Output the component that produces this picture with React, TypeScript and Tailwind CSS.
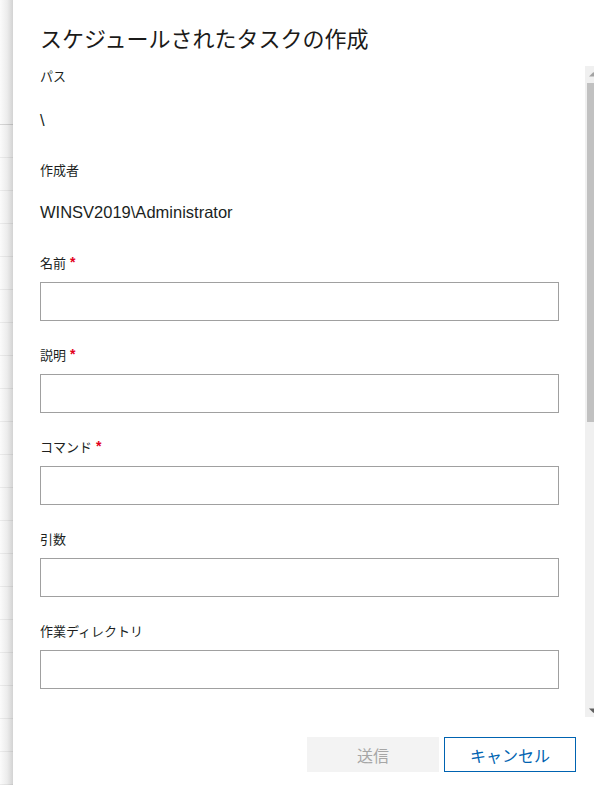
import React from 'react'

/**
 * スケジュールされたタスクの作成 パネル
 * - 左端に背後の一覧が少し見えている
 * - 右端のスクロールバーは途中で切れている
 */

const jp = { fontFamily: '"Noto Sans CJK JP", "Liberation Sans", sans-serif' }
const latin = { fontFamily: '"Liberation Sans", "Noto Sans CJK JP", sans-serif' }

interface FieldProps {
    label: string
    required?: boolean
}

function Field({ label, required }: FieldProps) {
    return (
        <div className="flex flex-col">
            <div className="flex items-center h-5 mb-[9px] text-[13px] leading-5 text-[#201f1e]" style={jp}>
                <span>{label}</span>
                {required && (
                    <span className="ml-[4px] text-[14px] font-bold text-[#e3001b] -mt-[3px]" style={latin}>
                        *
                    </span>
                )}
            </div>
            <input
                type="text"
                className="h-[39px] w-full border border-[#a0a0a0] bg-white px-2 outline-none"
            />
        </div>
    )
}

function BackgroundStrip() {
    const rows = Array.from({ length: 20 })
    return (
        <div className="flex flex-col w-[13px] shrink-0 bg-white">
            <div className="h-[5px] bg-white" />
            <div className="flex-1 flex flex-col bg-[linear-gradient(to_right,#fbfbfb,#ececec_55%,#d3d3d3)]">
                <div className="h-[125px] border-b border-[rgba(0,0,0,0.14)]" />
                {rows.map((_, i) => (
                    <div key={i} className="h-[33px] shrink-0 border-b border-[rgba(0,0,0,0.06)]" />
                ))}
            </div>
        </div>
    )
}

function ScrollBar() {
    return (
        <div className="flex flex-col w-[9px] shrink-0 bg-[#f0f0f0]">
            <div className="h-[17px]">
                <svg width="9" height="17" viewBox="0 0 9 17">
                    <polygon points="4,10.5 8.5,6 13,10.5" fill="#a3a3a3" />
                </svg>
            </div>
            <div className="h-[339px] ml-[2px] bg-[#c1c1c1]" />
            <div className="flex-1" />
            <div className="h-[17px]">
                <svg width="9" height="17" viewBox="0 0 9 17">
                    <polygon points="4,8.5 13,8.5 8.5,13" fill="#5f5f5f" />
                </svg>
            </div>
        </div>
    )
}

export default function App() {
    return (
        <div className="flex w-[594px] h-[785px] overflow-hidden bg-white">
            <BackgroundStrip />
            <div className="relative flex-1 flex flex-col bg-white min-w-0">
                <h1
                    className="pl-[27px] pt-[22px] h-[66px] text-[22px] leading-[30px] font-normal text-[#1b1a19]"
                    style={jp}
                >
                    スケジュールされたタスクの作成
                </h1>

                <div className="flex h-[651px]">
                    <div className="flex-1 overflow-hidden pl-[27px] pr-[26px]">
                        <div className="h-5 text-[13px] leading-5 text-[#201f1e]" style={jp}>パス</div>
                        <div className="mt-[24px] h-5 text-[16.5px] leading-5 text-[#201f1e]" style={latin}>\</div>
                        <div className="mt-[30px] h-5 text-[13px] leading-5 text-[#201f1e]" style={jp}>作成者</div>
                        <div className="mt-[22px] h-5 text-[16.5px] leading-5 text-[#201f1e]" style={latin}>
                            WINSV2019\Administrator
                        </div>

                        <div className="mt-[31px] flex flex-col gap-[24px]">
                            <Field label="名前" required />
                            <Field label="説明" required />
                            <Field label="コマンド" required />
                            <Field label="引数" />
                            <Field label="作業ディレクトリ" />
                        </div>
                    </div>
                    <ScrollBar />
                </div>

                <div className="flex justify-end gap-[5px] pt-[20px] pr-[18px]">
                    <button
                        type="button"
                        disabled
                        className="w-[132px] h-[35px] bg-[#f3f3f3] text-[16px] text-[#a6a6a6]"
                        style={jp}
                    >
                        送信
                    </button>
                    <button
                        type="button"
                        className="w-[132px] h-[35px] bg-white border border-[#0063b1] text-[16px] text-[#0063b1]"
                        style={jp}
                    >
                        キャンセル
                    </button>
                </div>
            </div>
        </div>
    )
}
